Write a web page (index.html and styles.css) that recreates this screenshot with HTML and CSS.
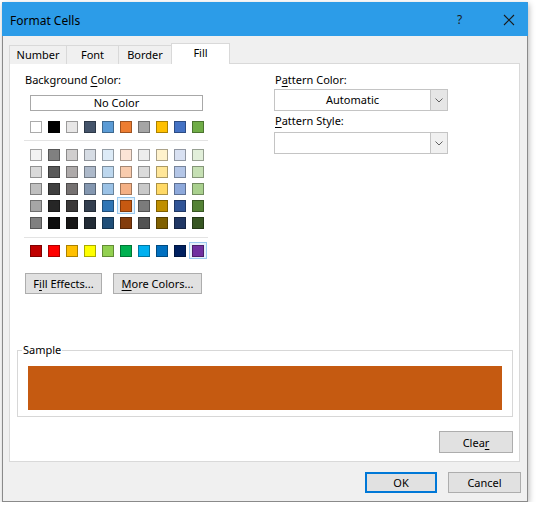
FILE: index.html
```html
<!DOCTYPE html>
<html>
<head>
<meta charset="utf-8">
<link rel="stylesheet" href="styles.css">
</head>
<body>
<div class="dialog">
  <div class="titlebar">
    <span class="title">Format Cells</span>
    <span class="help">?</span>
    <span class="close"><svg width="12" height="12" viewBox="0 0 12 12"><path d="M1 1 L11 11 M11 1 L1 11" stroke="#1b1b1b" stroke-width="1.1" fill="none"/></svg></span>
  </div>
  <div class="body">
    <div class="tabs">
      <div class="tab t-number">Number</div>
      <div class="tab t-font">Font</div>
      <div class="tab t-border">Border</div>
      <div class="tab t-fill active">Fill</div>
    </div>
    <div class="panel">
      <div class="top">
        <div class="left">
          <div class="label">Background <u>C</u>olor:</div>
          <div class="nocolor">No Color</div>
          <div class="row r1">
            <span class="cell"><span class="sw" style="background:#FFFFFF"></span></span>
            <span class="cell"><span class="sw" style="background:#000000"></span></span>
            <span class="cell"><span class="sw" style="background:#E7E6E6"></span></span>
            <span class="cell"><span class="sw" style="background:#44546A"></span></span>
            <span class="cell"><span class="sw" style="background:#5B9BD5"></span></span>
            <span class="cell"><span class="sw" style="background:#ED7D31"></span></span>
            <span class="cell"><span class="sw" style="background:#A5A5A5"></span></span>
            <span class="cell"><span class="sw" style="background:#FFC000"></span></span>
            <span class="cell"><span class="sw" style="background:#4472C4"></span></span>
            <span class="cell"><span class="sw" style="background:#70AD47"></span></span>
          </div>
          <div class="sep s1"></div>
          <div class="shades">
            <div class="row">
              <span class="cell"><span class="sw" style="background:#F2F2F2"></span></span>
              <span class="cell"><span class="sw" style="background:#808080"></span></span>
              <span class="cell"><span class="sw" style="background:#D0CECE"></span></span>
              <span class="cell"><span class="sw" style="background:#D6DCE4"></span></span>
              <span class="cell"><span class="sw" style="background:#DDEBF7"></span></span>
              <span class="cell"><span class="sw" style="background:#FCE4D6"></span></span>
              <span class="cell"><span class="sw" style="background:#EDEDED"></span></span>
              <span class="cell"><span class="sw" style="background:#FFF2CC"></span></span>
              <span class="cell"><span class="sw" style="background:#D9E1F2"></span></span>
              <span class="cell"><span class="sw" style="background:#E2EFDA"></span></span>
            </div>
            <div class="row">
              <span class="cell"><span class="sw" style="background:#D9D9D9"></span></span>
              <span class="cell"><span class="sw" style="background:#595959"></span></span>
              <span class="cell"><span class="sw" style="background:#AEAAAA"></span></span>
              <span class="cell"><span class="sw" style="background:#ADB9CA"></span></span>
              <span class="cell"><span class="sw" style="background:#BDD7EE"></span></span>
              <span class="cell"><span class="sw" style="background:#F8CBAD"></span></span>
              <span class="cell"><span class="sw" style="background:#DBDBDB"></span></span>
              <span class="cell"><span class="sw" style="background:#FFE699"></span></span>
              <span class="cell"><span class="sw" style="background:#B4C6E7"></span></span>
              <span class="cell"><span class="sw" style="background:#C6E0B4"></span></span>
            </div>
            <div class="row">
              <span class="cell"><span class="sw" style="background:#BFBFBF"></span></span>
              <span class="cell"><span class="sw" style="background:#404040"></span></span>
              <span class="cell"><span class="sw" style="background:#757171"></span></span>
              <span class="cell"><span class="sw" style="background:#8497B0"></span></span>
              <span class="cell"><span class="sw" style="background:#9BC2E6"></span></span>
              <span class="cell"><span class="sw" style="background:#F4B084"></span></span>
              <span class="cell"><span class="sw" style="background:#C9C9C9"></span></span>
              <span class="cell"><span class="sw" style="background:#FFD966"></span></span>
              <span class="cell"><span class="sw" style="background:#8EA9DB"></span></span>
              <span class="cell"><span class="sw" style="background:#A9D08E"></span></span>
            </div>
            <div class="row">
              <span class="cell"><span class="sw" style="background:#A6A6A6"></span></span>
              <span class="cell"><span class="sw" style="background:#262626"></span></span>
              <span class="cell"><span class="sw" style="background:#3A3838"></span></span>
              <span class="cell"><span class="sw" style="background:#333F4F"></span></span>
              <span class="cell"><span class="sw" style="background:#2F75B5"></span></span>
              <span class="cell sel"><span class="sw" style="background:#C65911"></span></span>
              <span class="cell"><span class="sw" style="background:#7B7B7B"></span></span>
              <span class="cell"><span class="sw" style="background:#BF8F00"></span></span>
              <span class="cell"><span class="sw" style="background:#305496"></span></span>
              <span class="cell"><span class="sw" style="background:#548235"></span></span>
            </div>
            <div class="row">
              <span class="cell"><span class="sw" style="background:#808080"></span></span>
              <span class="cell"><span class="sw" style="background:#0D0D0D"></span></span>
              <span class="cell"><span class="sw" style="background:#171616"></span></span>
              <span class="cell"><span class="sw" style="background:#222B35"></span></span>
              <span class="cell"><span class="sw" style="background:#1F4E78"></span></span>
              <span class="cell"><span class="sw" style="background:#833C0C"></span></span>
              <span class="cell"><span class="sw" style="background:#525252"></span></span>
              <span class="cell"><span class="sw" style="background:#806000"></span></span>
              <span class="cell"><span class="sw" style="background:#203764"></span></span>
              <span class="cell"><span class="sw" style="background:#375623"></span></span>
            </div>
          </div>
          <div class="sep s2"></div>
          <div class="row std">
            <span class="cell"><span class="sw" style="background:#C00000"></span></span>
            <span class="cell"><span class="sw" style="background:#FF0000"></span></span>
            <span class="cell"><span class="sw" style="background:#FFC000"></span></span>
            <span class="cell"><span class="sw" style="background:#FFFF00"></span></span>
            <span class="cell"><span class="sw" style="background:#92D050"></span></span>
            <span class="cell"><span class="sw" style="background:#00B050"></span></span>
            <span class="cell"><span class="sw" style="background:#00B0F0"></span></span>
            <span class="cell"><span class="sw" style="background:#0070C0"></span></span>
            <span class="cell"><span class="sw" style="background:#002060"></span></span>
            <span class="cell sel"><span class="sw" style="background:#7030A0"></span></span>
          </div>
          <div class="btnrow">
            <button class="btn b-fill">F<u>i</u>ll Effects...</button>
            <button class="btn b-more"><u>M</u>ore Colors...</button>
          </div>
        </div>
        <div class="right">
          <div class="label">P<u>a</u>ttern Color:</div>
          <div class="combo c1"><span class="combo-text">Automatic</span><span class="arrow"><svg width="8" height="5" viewBox="0 0 8 5"><path d="M0.5 0.5 L4 4 L7.5 0.5" stroke="#606060" stroke-width="1" fill="none"/></svg></span></div>
          <div class="label l2"><u>P</u>attern Style:</div>
          <div class="combo c2"><span class="combo-text"></span><span class="arrow"><svg width="8" height="5" viewBox="0 0 8 5"><path d="M0.5 0.5 L4 4 L7.5 0.5" stroke="#606060" stroke-width="1" fill="none"/></svg></span></div>
        </div>
      </div>
      <fieldset class="sample">
        <legend>Sample</legend>
        <div class="sample-color"></div>
      </fieldset>
      <div class="clearrow">
        <button class="btn b-clear">Clea<u>r</u></button>
      </div>
    </div>
    <div class="footer">
      <button class="btn b-ok">OK</button>
      <button class="btn b-cancel">Cancel</button>
    </div>
  </div>
</div>
</body>
</html>
```
FILE: styles.css
```css
* { box-sizing: border-box; }
html, body { margin: 0; padding: 0; background: #ffffff; }
body {
  font-family: "Noto Sans", "Open Sans", "DejaVu Sans", sans-serif;
  font-size: 11px;
  color: #000;
}
u { text-decoration: underline; text-underline-offset: 2px; }

.dialog {
  margin: 2px 0 0 2px;
  width: 526px;
  height: 500px;
  border: 1px solid #8a8a8a;
  border-top-color: #2c9ce8;
  background: #f0f0f0;
  box-shadow: 1px 2px 6px rgba(0,0,0,0.28);
  display: flex;
  flex-direction: column;
}
.titlebar {
  height: 33px;
  background: #2c9ce8;
  display: flex;
  align-items: center;
  margin: 0 -1px;
  padding: 0 0 0 8px;
}
.title { font-size: 12px; flex: 1; padding-top: 1px; }
.help { font-size: 12px; width: 14px; margin-right: 32px; color: #1b1b1b; }
.close { width: 12px; height: 12px; margin-right: 13px; display: flex; }

.body { flex: 1; display: flex; flex-direction: column; }

.tabs {
  display: flex;
  align-items: flex-end;
  padding: 8px 0 0 6px;
  height: 28px;
  position: relative;
  z-index: 1;
  margin-bottom: -1px;
}
.tab {
  height: 19px;
  border: 1px solid #d9d9d9;
  border-bottom: none;
  background: #f0f0f0;
  display: flex;
  align-items: center;
  justify-content: center;
  font-size: 11px;
  padding-bottom: 1px;
}
.t-number { width: 58px; }
.t-font { width: 52px; border-left: none; }
.t-border { width: 53px; border-left: none; }
.t-fill { width: 59px; margin-left: -1px; }
.tab.active {
  height: 21px;
  background: #fff;
  padding-bottom: 3px;
}

.panel {
  margin-left: 6px;
  width: 511px;
  height: 399px;
  background: #fff;
  border: 1px solid #d9d9d9;
  display: flex;
  flex-direction: column;
}
.top { display: flex; padding: 8px 0 0 14px; }
.left { width: 250px; display: flex; flex-direction: column; }
.right { width: 174px; display: flex; flex-direction: column; }
.label { height: 16px; line-height: 16px; padding-left: 1px; }

.nocolor {
  margin: 7px 0 0 6px;
  width: 173px;
  height: 16px;
  border: 1px solid #a8a8a8;
  text-align: center;
  line-height: 14px;
}
.row { display: flex; margin-left: 3px; }
.r1 { margin-top: 7px; }
.cell {
  width: 18px;
  height: 17px;
  padding: 2px 0 0 2px;
  border: 1px solid transparent;
}
.cell.sel { border-color: #99c9ef; background: #e5f1fb; }
.sw {
  display: block;
  width: 12px;
  height: 12px;
  border: 1px solid rgba(0,0,0,0.33);
}
.sep { width: 184px; height: 1px; background: #e3e3e3; }
.s1 { margin-top: 5px; }
.shades { margin-top: 5px; }
.shades .row { margin-left: 3px; }
.s2 { margin-top: 6px; }
.std { margin-top: 4px; }

.btn {
  font-family: inherit;
  font-size: 11px;
  color: #000;
  background: #e1e1e1;
  border: 1px solid #adadad;
  padding: 0;
  margin: 0;
  height: 21px;
  line-height: 17px;
}
.btnrow { display: flex; margin-top: 14px; padding-left: 1px; gap: 11px; }
.b-fill { width: 77px; }
.b-more { width: 89px; }

.combo {
  margin-top: 1px;
  height: 22px;
  border: 1px solid #c4c4c4;
  display: flex;
  background: #fff;
}
.combo-text { flex: 1; text-align: center; line-height: 20px; }
.arrow {
  width: 17px;
  border-left: 1px solid #c4c4c4;
  background: #e6e6e6;
  display: flex;
  align-items: center;
  justify-content: center;
}
.c2 .arrow { background: #f0f0f0; }
.l2 { margin-top: 2px; }
.c2 { margin-top: 3px; }

.sample {
  margin: 49px 0 0 7px;
  width: 496px;
  padding: 9px 10px 6px 10px;
  border: 1px solid #d7d7d7;
  min-width: 0;
}
.sample legend {
  padding: 0 1px;
  margin-left: -6px;
  line-height: 14px;
  height: 14px;
}
.sample-color { width: 474px; height: 44px; background: #c55a11; }

.clearrow { display: flex; justify-content: flex-end; margin: 14px 6px 0 0; }
.b-clear { width: 74px; height: 22px; }

.footer {
  display: flex;
  justify-content: flex-end;
  padding: 10px 6px 0 0;
  gap: 11px;
}
.b-ok {
  width: 72px;
  border: 2px solid #0078d7;
}
.b-cancel { width: 73px; }
```
